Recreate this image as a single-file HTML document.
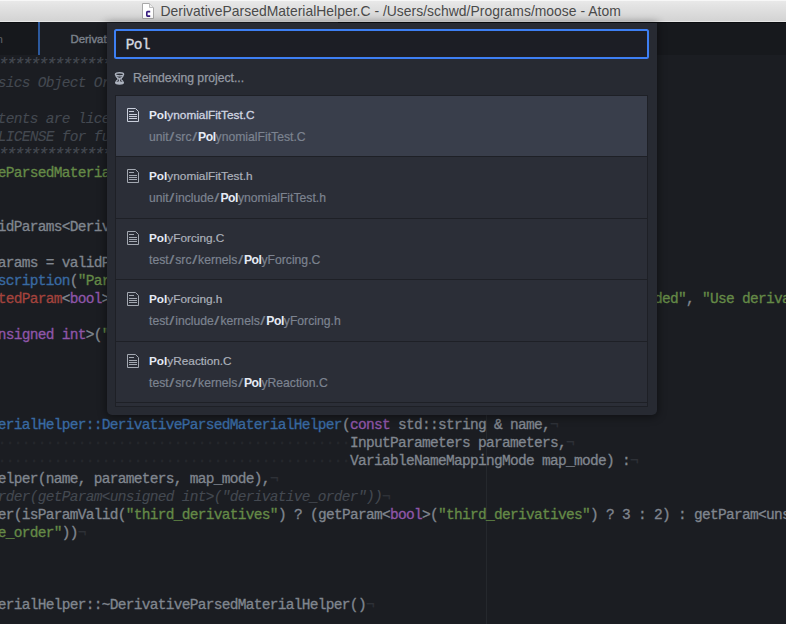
<!DOCTYPE html>
<html><head><meta charset="utf-8">
<style>
*{box-sizing:border-box}
html,body{margin:0;padding:0;width:786px;height:624px;overflow:hidden;background:#1b1d22}
body{position:relative;font-family:"Liberation Sans",sans-serif}
#title{position:absolute;left:0;top:0;width:786px;height:23px;background:linear-gradient(#f7f7f7 0px,#f7f7f7 1px,#e9e9e9 1px,#e5e5e5 4px,#d3d3d3 21px,#e6e6e6 21px,#e6e6e6 22px,#0b0d10 22px)}
#title .t{position:absolute;left:160.5px;top:2.7px;font-size:13.9px;line-height:16px;color:#4a4a4a;white-space:nowrap;letter-spacing:0.025px}
#title svg{position:absolute;left:142px;top:3px}
#tabs{position:absolute;left:0;top:23px;width:786px;height:32px;background:#17191d}
#tab1{position:absolute;left:0;top:0;width:38px;height:32px;background:#16181c;overflow:hidden}
#tab2{position:absolute;left:38px;top:-1px;width:300px;height:33px;background:#1b1d22;border-left:2px solid #2c599d}
.tabt{position:absolute;top:10.2px;font-size:11.5px;font-weight:bold;color:#858b95;white-space:nowrap}
#code{position:absolute;left:-2.2px;top:56px;font-family:"Liberation Mono",monospace;font-size:14.5px;letter-spacing:-0.7px;line-height:18px;color:#80868f}
#code div{height:18px;white-space:pre;-webkit-text-stroke:0.3px}
.c{color:#444951;font-style:italic;-webkit-text-stroke-width:0.1px}
.s{color:#658a47}
.ast{font-size:18px;letter-spacing:-2.8px;position:relative;top:0}
.k{color:#8f56a9}
.f{color:#396aa2}
.r{color:#a3433d}
.i{color:#2e3137}
.d{color:#25282d}
#guide{position:absolute;left:486px;top:55px;width:1px;height:569px;background:#25282d}
#modal{position:absolute;left:107px;top:23px;width:550px;height:392px;background:#272a32;border-radius:0 0 5px 5px;box-shadow:0 1px 8px 1px rgba(0,0,0,0.45)}
#input{position:absolute;left:7px;top:6px;width:535px;height:30px;border:2px solid #3d7ff3;border-radius:2.5px;background:#1c1e25}
#input span{position:absolute;left:9.8px;top:5.1px;font-family:"Liberation Mono",monospace;font-size:14.5px;letter-spacing:-0.7px;line-height:18px;color:#d7dae0;-webkit-text-stroke:0.35px #d7dae0}
#status{position:absolute;left:26px;top:48.3px;font-size:12.2px;line-height:14px;color:#959aa3;white-space:nowrap;-webkit-text-stroke:0.25px #959aa3}
#hg{position:absolute;left:7px;top:48.5px}
#list{position:absolute;left:8px;top:72px;width:533px;height:312px;border:1px solid #1e2026;background:#2b2e37;overflow:hidden}
.item{position:relative;height:61px;border-bottom:1px solid #1e2026}
.item.e{height:62px}
.item.sel{background:#393e4b}
.item svg{position:absolute;left:11px;top:12px}
.pri{position:absolute;left:33px;top:12px;font-size:11.8px;line-height:14px;color:#adb2bc;white-space:nowrap;-webkit-text-stroke:0.2px #adb2bc}
.sec{position:absolute;left:33px;top:34px;font-size:12.2px;line-height:14px;color:#7c8390;white-space:nowrap;-webkit-text-stroke:0.2px #7c8390}
.sec b{letter-spacing:-0.5px}
.sl{display:inline-block;transform:scaleX(1.45);margin:0 1.6px}
b{color:#e6ebf5;font-weight:bold;-webkit-text-stroke:0}
.sel .pri{color:#d0d5e1;-webkit-text-stroke:0.3px #d0d5e1}
</style></head><body>
<div id="title">
<svg width="12" height="16" viewBox="0 0 12 16"><path d="M0.5 0.5 H7.5 L11.5 4.5 V15.5 H0.5 Z" fill="#fff" stroke="#a8a8a8"/><path d="M7.5 0.5 V4.5 H11.5" fill="#eee" stroke="#bdbdbd"/><path d="M8.2 8.6 H5.6 Q4.8 8.6 4.8 9.4 V12.3 Q4.8 13.1 5.6 13.1 H8.2" fill="none" stroke="#35197f" stroke-width="1.6"/></svg>
<div class="t">DerivativeParsedMaterialHelper.C - /Users/schwd/Programs/moose - Atom</div>
</div>
<div id="tabs">
<div id="tab1"><span class="tabt" style="right:35px;font-weight:normal;color:#5f636a">ParsedFunction</span></div>
<div id="tab2"><span class="tabt" style="left:30.5px;top:11.2px;font-weight:normal;font-size:11.4px;-webkit-text-stroke:0.4px #7b818b;color:#7b818b">DerivativeParsedMaterialHelper.C</span></div>
</div>
<div id="guide"></div>
<div id="code">
<div><span class="c"><span class="ast">*************************************************</span>/</span></div>
<div><span class="c">sics Object Oriented Simulation Environment  */</span></div>
<div><span class="c">                                             */</span></div>
<div><span class="c">tents are licensed under LGPL V2.1           */</span></div>
<div><span class="c">LICENSE for full restrictions                */</span></div>
<div><span class="c"><span class="ast">*************************************************</span>/</span></div>
<div><span class="s">eParsedMaterialHelper.h"</span></div>
<div></div>
<div></div>
<div>idParams&lt;DerivativeParsedMaterialHelper&gt;()</div>
<div></div>
<div>arams = validParams&lt;ParsedMaterialHelper&gt;();</div>
<div><span class="f">scription</span>(<span class="s">"Parsed Function Material with automatic derivatives."</span>);</div>
<div><span class="r">tedParam</span>&lt;<span class="k">bool</span>&gt;(<span class="s">"third_derivatives"</span>, <span class="s">"Flag to indicate if third derivatives are needed"</span>, <span class="s">"Use derivative_order </span></div>
<div></div>
<div><span class="k">nsigned int</span>&gt;(<span class="s">"derivative_order"</span>, 3, <span class="s">"Maximum order of derivatives taken"</span>);</div>
<div></div>
<div></div>
<div></div>
<div></div>
<div><span class="f">erialHelper::DerivativeParsedMaterialHelper</span>(<span class="k">const</span> std::string &amp; name,<span class="i">¬</span></div>
<div><span class="d">············································</span>InputParameters parameters,<span class="i">¬</span></div>
<div><span class="d">············································</span>VariableNameMappingMode map_mode) :<span class="i">¬</span></div>
<div>elper(name, parameters, map_mode),<span class="i">¬</span></div>
<div><span class="c">rder(getParam&lt;unsigned int&gt;("derivative_order"))</span><span class="i">¬</span></div>
<div>er(isParamValid(<span class="s">"third_derivatives"</span>) ? (getParam&lt;<span class="k">bool</span>&gt;(<span class="s">"third_derivatives"</span>) ? 3 : 2) : getParam&lt;unsigned</div>
<div><span class="s">e_order"</span>))<span class="i">¬</span></div>
<div></div>
<div></div>
<div></div>
<div>erialHelper::~DerivativeParsedMaterialHelper()<span class="i">¬</span></div>
</div>
<div id="modal">
<div id="input"><span>Pol</span></div>
<svg id="hg" width="11" height="13" viewBox="0 0 11 13"><g stroke="#adb3bf" fill="none"><ellipse cx="5.5" cy="2.3" rx="4.1" ry="1.6" stroke-width="1.4"/><path d="M1.6 3.5 Q2.5 5.5 4.6 6.3 M9.4 3.5 Q8.5 5.5 6.4 6.3" stroke-width="1.1"/><path d="M3 6.3 H8" stroke-width="1.1"/><path d="M5.5 6.3 V10.5" stroke-width="1.2"/><path d="M4.5 7.2 Q2 8.5 1.4 10.8 M6.5 7.2 Q9 8.5 9.6 10.8" stroke-width="1.1"/></g><ellipse cx="5.5" cy="11" rx="4.4" ry="1.7" fill="#adb3bf"/></svg>
<div id="status">Reindexing project...</div>
<div id="list">
<div class="item sel"><svg width="12" height="14" viewBox="0 0 12 14"><path d="M0.5 0.5 H8.5 L11.5 3.5 V13.5 H0.5 Z" fill="none" stroke="#c9cedb"/><path d="M2 3.5 H7 M2 6.5 H10 M2 8.5 H10 M2 10.5 H10" stroke="#c9cedb"/></svg><div class="pri"><b>Pol</b>ynomialFitTest.C</div><div class="sec">unit<span class="sl">/</span>src<span class="sl">/</span><b>Pol</b>ynomialFitTest.C</div></div>
<div class="item e"><svg width="12" height="14" viewBox="0 0 12 14"><path d="M0.5 0.5 H8.5 L11.5 3.5 V13.5 H0.5 Z" fill="none" stroke="#a3a8b1"/><path d="M2 3.5 H7 M2 6.5 H10 M2 8.5 H10 M2 10.5 H10" stroke="#a3a8b1"/></svg><div class="pri"><b>Pol</b>ynomialFitTest.h</div><div class="sec">unit<span class="sl">/</span>include<span class="sl">/</span><b>Pol</b>ynomialFitTest.h</div></div>
<div class="item"><svg width="12" height="14" viewBox="0 0 12 14"><path d="M0.5 0.5 H8.5 L11.5 3.5 V13.5 H0.5 Z" fill="none" stroke="#a3a8b1"/><path d="M2 3.5 H7 M2 6.5 H10 M2 8.5 H10 M2 10.5 H10" stroke="#a3a8b1"/></svg><div class="pri"><b>Pol</b>yForcing.C</div><div class="sec">test<span class="sl">/</span>src<span class="sl">/</span>kernels<span class="sl">/</span><b>Pol</b>yForcing.C</div></div>
<div class="item e"><svg width="12" height="14" viewBox="0 0 12 14"><path d="M0.5 0.5 H8.5 L11.5 3.5 V13.5 H0.5 Z" fill="none" stroke="#a3a8b1"/><path d="M2 3.5 H7 M2 6.5 H10 M2 8.5 H10 M2 10.5 H10" stroke="#a3a8b1"/></svg><div class="pri"><b>Pol</b>yForcing.h</div><div class="sec">test<span class="sl">/</span>include<span class="sl">/</span>kernels<span class="sl">/</span><b>Pol</b>yForcing.h</div></div>
<div class="item"><svg width="12" height="14" viewBox="0 0 12 14"><path d="M0.5 0.5 H8.5 L11.5 3.5 V13.5 H0.5 Z" fill="none" stroke="#a3a8b1"/><path d="M2 3.5 H7 M2 6.5 H10 M2 8.5 H10 M2 10.5 H10" stroke="#a3a8b1"/></svg><div class="pri"><b>Pol</b>yReaction.C</div><div class="sec">test<span class="sl">/</span>src<span class="sl">/</span>kernels<span class="sl">/</span><b>Pol</b>yReaction.C</div></div>
<div class="item"></div>
</div>
</div>
</body></html>
